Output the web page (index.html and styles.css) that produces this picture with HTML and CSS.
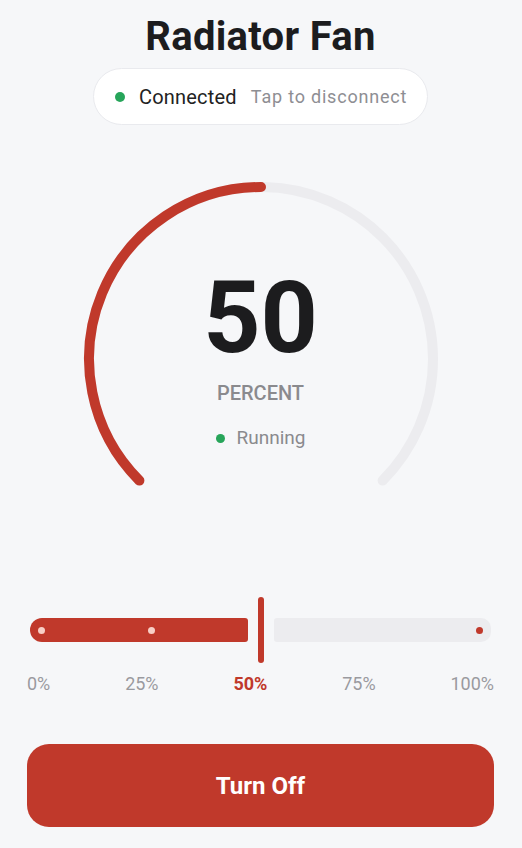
FILE: index.html
```html
<!DOCTYPE html>
<html lang="en">
<head>
    <meta charset="UTF-8">
    <meta name="viewport" content="width=device-width, initial-scale=1.0">
    <title>Radiator Fan</title>
    <link rel="stylesheet" href="styles.css">
</head>
<body>

<div class="page">
    <h1 class="title">Radiator Fan</h1>

    <button class="status-pill">
        <span class="dot"></span>
        <span class="status-text">Connected</span>
        <span class="status-hint">Tap to disconnect</span>
    </button>

    <!-- Speed gauge -->
    <div class="gauge">
        <svg class="gauge-ring" width="356" height="310" viewBox="0 0 356 310">
            <path d="M 56.4 298.6 A 172 172 0 1 1 299.6 298.6" fill="none" stroke="#ececef" stroke-width="10" stroke-linecap="round"/>
            <path d="M 56.4 298.6 A 172 172 0 0 1 178 5" fill="none" stroke="#c0392b" stroke-width="10" stroke-linecap="round"/>
        </svg>
        <div class="gauge-center">
            <div class="gauge-value">50</div>
            <div class="gauge-unit">PERCENT</div>
            <div class="gauge-state"><span class="dot small"></span>Running</div>
        </div>
    </div>

    <!-- Speed slider -->
    <div class="slider">
        <div class="slider-fill">
            <span class="tick light"></span>
            <span class="tick light"></span>
        </div>
        <div class="slider-thumb"></div>
        <div class="slider-track">
            <span class="tick red"></span>
        </div>
    </div>
    <div class="slider-labels">
        <span>0%</span>
        <span>25%</span>
        <span class="active">50%</span>
        <span>75%</span>
        <span>100%</span>
    </div>

    <button class="power-button">Turn Off</button>
</div>

</body>
</html>
```

FILE: styles.css
```css
body {
    margin: 0;
    padding: 0;
    background-color: #f6f7f9;
    color: #1c1c1e;
    font-family: Roboto, "Noto Sans", Arial, sans-serif;
}
.page {
    display: flex;
    flex-direction: column;
    align-items: center;
    padding: 0 28px 0 27px;
}
.title {
    margin: 13px 0 0;
    font-size: 40px;
    line-height: 48px;
    font-weight: 700;
    letter-spacing: 0.3px;
}
/* Connection pill */
.status-pill {
    margin-top: 7px;
    height: 57px;
    width: 335px;
    display: flex;
    align-items: center;
    padding: 0 21px;
    background-color: #fff;
    border: 1px solid #e9eaee;
    border-radius: 29px;
    font-family: inherit;
    cursor: pointer;
}
.dot {
    width: 10px;
    height: 10px;
    border-radius: 50%;
    background-color: #27a55a;
    flex-shrink: 0;
}
.dot.small {
    width: 9px;
    height: 9px;
    margin-right: 12px;
}
.status-text {
    margin-left: 14px;
    font-size: 20px;
    color: #222;
    letter-spacing: 0.2px;
}
.status-hint {
    margin-left: 14px;
    font-size: 18px;
    color: #8e8e93;
    letter-spacing: 0.8px;
    white-space: nowrap;
}
/* Gauge */
.gauge {
    position: relative;
    margin-top: 57px;
    width: 356px;
    height: 310px;
}
.gauge-ring {
    display: block;
}
.gauge-center {
    position: absolute;
    top: 0;
    left: 0;
    right: 0;
    bottom: 0;
    display: flex;
    flex-direction: column;
    align-items: center;
    padding-top: 86px;
}
.gauge-value {
    font-size: 100px;
    line-height: 100px;
    font-weight: 700;
    color: #1c1c1e;
}
.gauge-unit {
    margin-top: 13px;
    font-size: 20px;
    line-height: 24px;
    font-weight: 500;
    color: #8a8a8e;
}
.gauge-state {
    margin-top: 21px;
    display: flex;
    align-items: center;
    font-size: 19px;
    line-height: 24px;
    color: #8a8a8e;
}
/* Slider */
.slider {
    margin-top: 105px;
    width: 461px;
    height: 66px;
    display: flex;
    align-items: center;
}
.slider-fill,
.slider-track {
    flex: 1;
    height: 24px;
    display: flex;
    align-items: center;
}
.slider-fill {
    background-color: #c0392b;
    border-radius: 12px 3px 3px 12px;
    padding-left: 8px;
    gap: 103px;
}
.slider-track {
    background-color: #ececef;
    border-radius: 3px 10px 10px 3px;
    justify-content: flex-end;
    padding-right: 8px;
}
.tick {
    width: 7px;
    height: 7px;
    border-radius: 50%;
}
.tick.light {
    background-color: #f8cfc6;
}
.tick.red {
    background-color: #c0392b;
}
.slider-thumb {
    width: 6px;
    height: 66px;
    margin: 0 10px;
    border-radius: 3px;
    background-color: #c0392b;
}
.slider-labels {
    margin-top: 10px;
    width: 100%;
    display: flex;
    justify-content: space-between;
    font-size: 18px;
    line-height: 22px;
    color: #9a9a9f;
}
.slider-labels .active {
    color: #c0392b;
    font-weight: 700;
}
/* Power button */
.power-button {
    margin-top: 49px;
    width: 100%;
    height: 83px;
    border: none;
    border-radius: 22px;
    background-color: #c0392b;
    color: #fff;
    font-family: inherit;
    font-size: 24px;
    font-weight: 700;
    cursor: pointer;
}
```
